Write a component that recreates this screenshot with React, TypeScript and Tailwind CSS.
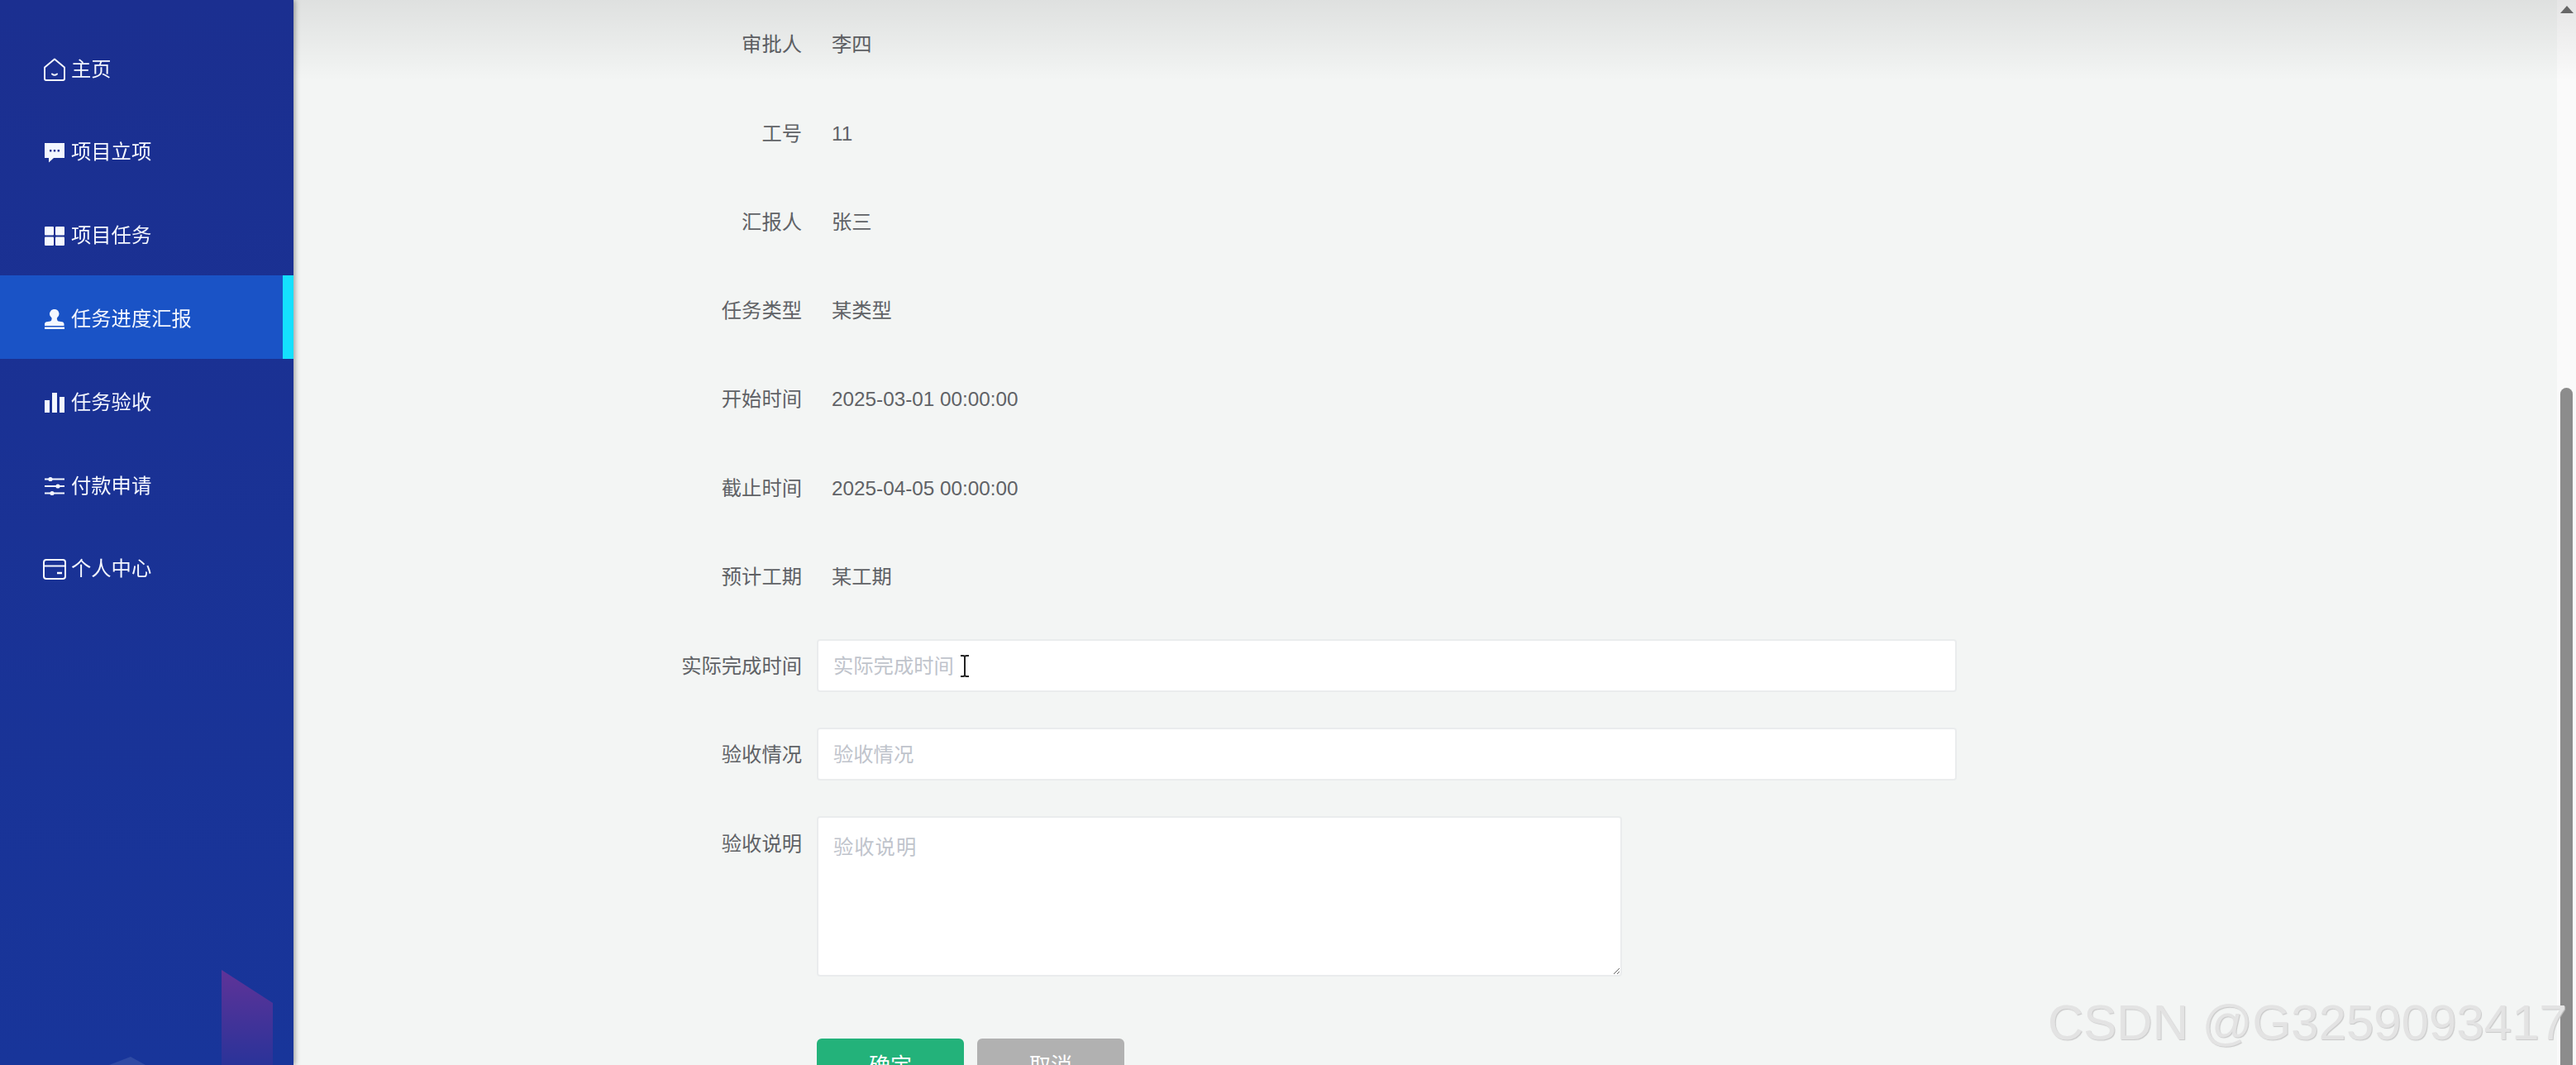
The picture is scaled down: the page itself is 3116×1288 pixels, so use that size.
import React from "react";

const HomeIcon = () => (
  <svg width="28" height="28" viewBox="0 0 28 28" fill="none" stroke="currentColor" strokeWidth="2" strokeLinejoin="round" strokeLinecap="round">
    <path d="M2 11.5 14 1.5 26 11.5V25a2 2 0 0 1-2 2H4a2 2 0 0 1-2-2Z" />
    <path d="M11 19.5q3 2.5 6 0" />
  </svg>
);

const ChatIcon = () => (
  <svg width="24" height="24" viewBox="0 0 24 24" fill="currentColor" fillRule="evenodd">
    <path d="M0 0H24V18H11L5 23.5V18H0ZM6 8v2.4h2.4V8ZM10.8 8v2.4h2.4V8ZM15.6 8v2.4H18V8Z" />
  </svg>
);

const GridIcon = () => (
  <svg width="24" height="23" viewBox="0 0 24 23" fill="currentColor">
    <rect x="0" y="0" width="11" height="10.5" rx="1" />
    <rect x="13" y="0" width="11" height="10.5" rx="1" />
    <rect x="0" y="12.5" width="11" height="10.5" rx="1" />
    <rect x="13" y="12.5" width="11" height="10.5" rx="1" />
  </svg>
);

const StampIcon = () => (
  <svg width="24" height="25" viewBox="0 0 24 25" fill="currentColor">
    <path d="M12 0a5.5 5.5 0 0 1 3.5 9.7c-.6.6-.8 1.5-.5 2.4l.3 1.2c.2.6.6 1 1.3 1.1l4.5.9c1.5.3 2.4 1.2 2.4 2.7v2H0v-2c0-1.5.9-2.4 2.4-2.7l4.5-.9c.7-.1 1.1-.5 1.3-1.1l.3-1.2c.3-.9.1-1.8-.5-2.4A5.5 5.5 0 0 1 12 0Z" />
    <rect x="0" y="21.5" width="24" height="2.5" />
  </svg>
);

const BarsIcon = () => (
  <svg width="24" height="24" viewBox="0 0 24 24" fill="currentColor">
    <rect x="0" y="9" width="6" height="15" />
    <rect x="9" y="0" width="6" height="24" />
    <rect x="18" y="5" width="6" height="19" />
  </svg>
);

const SlidersIcon = () => (
  <svg width="24" height="24" viewBox="0 0 24 24" fill="currentColor" stroke="currentColor" strokeWidth="2">
    <path d="M0 3.5H24M0 12H24M0 20.5H24" fill="none" />
    <circle cx="7" cy="3.5" r="1.6" />
    <circle cx="16" cy="12" r="1.6" />
    <circle cx="9" cy="20.5" r="1.6" />
  </svg>
);

const WalletIcon = () => (
  <svg width="28" height="25" viewBox="0 0 28 25" fill="none" stroke="currentColor" strokeWidth="2">
    <rect x="1" y="1" width="26" height="23" rx="3" />
    <path d="M1 8.5H27" />
    <path d="M17 17H23" strokeWidth="2.5" />
  </svg>
);

const menuItems = [
  { label: "主页", icon: <HomeIcon /> },
  { label: "项目立项", icon: <ChatIcon /> },
  { label: "项目任务", icon: <GridIcon /> },
  { label: "任务进度汇报", icon: <StampIcon />, active: true },
  { label: "任务验收", icon: <BarsIcon /> },
  { label: "付款申请", icon: <SlidersIcon /> },
  { label: "个人中心", icon: <WalletIcon /> },
];

const infoRows = [
  { label: "审批人", value: "李四" },
  { label: "工号", value: "11" },
  { label: "汇报人", value: "张三" },
  { label: "任务类型", value: "某类型" },
  { label: "开始时间", value: "2025-03-01 00:00:00" },
  { label: "截止时间", value: "2025-04-05 00:00:00" },
  { label: "预计工期", value: "某工期" },
];

function Sidebar() {
  return (
    <aside className="relative z-10 flex w-[355px] shrink-0 flex-col overflow-hidden bg-gradient-to-b from-[#1b2f90] to-[#18359a] pt-[31px] shadow-[2px_0_6px_rgba(0,0,0,0.35)]">
      {menuItems.map((item) => (
        <div
          key={item.label}
          className={`flex h-[100.8px] shrink-0 items-center pl-[52px] pt-[5px] text-[24.3px] text-[#f4f7ff] ${
            item.active ? "border-r-[13px] border-[#14e0ff] bg-[#1a53c6]" : ""
          }`}
        >
          <span className="mr-[6px] flex w-[28px] justify-center">{item.icon}</span>
          <span>{item.label}</span>
        </div>
      ))}
      <svg className="absolute bottom-0 left-0" width="355" height="120" viewBox="0 0 355 120">
        <defs>
          <linearGradient id="deco" x1="0" y1="0" x2="0" y2="1">
            <stop offset="0" stopColor="#5f3398" />
            <stop offset="1" stopColor="#2a3399" />
          </linearGradient>
        </defs>
        <path d="M268 5 330 45V120H268Z" fill="url(#deco)" />
        <path d="M132 120 158 110 176 120Z" fill="#2f4aa4" />
      </svg>
    </aside>
  );
}

function InfoRow({ label, value }: { label: string; value: string }) {
  return (
    <div className="mb-[43.25px] flex h-[64px] shrink-0 items-center pt-[1px] text-[24.3px] text-[#606266]">
      <label className="w-[160px] text-right">{label}</label>
      <span className="ml-[36px]">{value}</span>
    </div>
  );
}

function InputRow({ label, children }: { label: string; children?: React.ReactNode }) {
  return (
    <div className="relative mb-[43.25px] flex h-[64px] shrink-0 items-center">
      <label className="w-[160px] pt-[2px] text-right text-[24.3px] text-[#606266]">{label}</label>
      <input
        placeholder={label}
        className="ml-[18px] h-[64px] w-[1379px] rounded-[4px] border-2 border-[#eaeced] bg-white pl-[18px] pr-[16px] pt-[2px] text-[24.3px] outline-none placeholder:text-[#c0c4cc]"
      />
      {children}
    </div>
  );
}

function MainPanel() {
  return (
    <main className="flex min-w-0 flex-1 flex-col bg-[#f3f5f4] pl-[455px] pt-[22px]">
      {infoRows.map((row) => (
        <InfoRow key={row.label} {...row} />
      ))}
      <InputRow label="实际完成时间">
        {/* text cursor caught in the frame */}
        <svg className="absolute left-[351px] top-[19px]" width="12" height="27" viewBox="0 0 12 27" fill="none" stroke="#222" strokeWidth="2">
          <path d="M1 1h3q2 0 2 2v21q0 2-2 2H1M11 1H8q-2 0-2 2M11 26H8q-2 0-2-2" />
        </svg>
      </InputRow>
      <InputRow label="验收情况" />
      <div className="flex shrink-0 items-start">
        <label className="w-[160px] pt-[16px] text-right text-[24.3px] text-[#606266]">验收说明</label>
        <textarea
          placeholder="验收说明"
          className="ml-[18px] h-[194px] w-[974px] rounded-[4px] border-2 border-[#eaeced] bg-white px-[18px] py-[18px] text-[24.3px] tracking-[1px] outline-none placeholder:text-[#c0c4cc]"
        />
      </div>
      <div className="ml-[178px] mt-[75px] flex shrink-0 gap-[16px]">
        <button className="h-[66px] w-[178px] rounded-[6px] bg-[#23b27a] text-[26px] text-white">确定</button>
        <button className="h-[66px] w-[178px] rounded-[6px] bg-[#b1b1b1] text-[26px] text-white">取消</button>
      </div>
    </main>
  );
}

function Scrollbar() {
  return (
    <div className="flex w-[23px] shrink-0 flex-col items-center bg-[#fafafa] pt-[7px]">
      <svg className="shrink-0" width="16" height="9" viewBox="0 0 16 9" fill="#6f6f6f">
        <path d="M8 0 16 9H0Z" />
      </svg>
      <div className="mt-[453px] h-[900px] w-[15px] shrink-0 rounded-t-full bg-[#8c8c8c]" />
    </div>
  );
}

export default function App() {
  return (
    <div className="relative flex h-[1288px] w-[3116px] overflow-hidden font-['Liberation_Sans','Noto_Sans_CJK_SC',sans-serif] blur-[0.5px]">
      <Sidebar />
      <MainPanel />
      <Scrollbar />
      {/* shadow of the fixed header above the scrolled page */}
      <div className="pointer-events-none absolute left-[355px] right-0 top-0 h-[98px] bg-gradient-to-b from-black/[0.085] to-transparent" />
      <div className="pointer-events-none absolute left-[2477px] top-[1202px] whitespace-nowrap text-[60px] leading-[70px] text-[#e3e3e3] [text-shadow:1px_1px_1px_#c8c8c8]">
        CSDN @G3259093417
      </div>
    </div>
  );
}
